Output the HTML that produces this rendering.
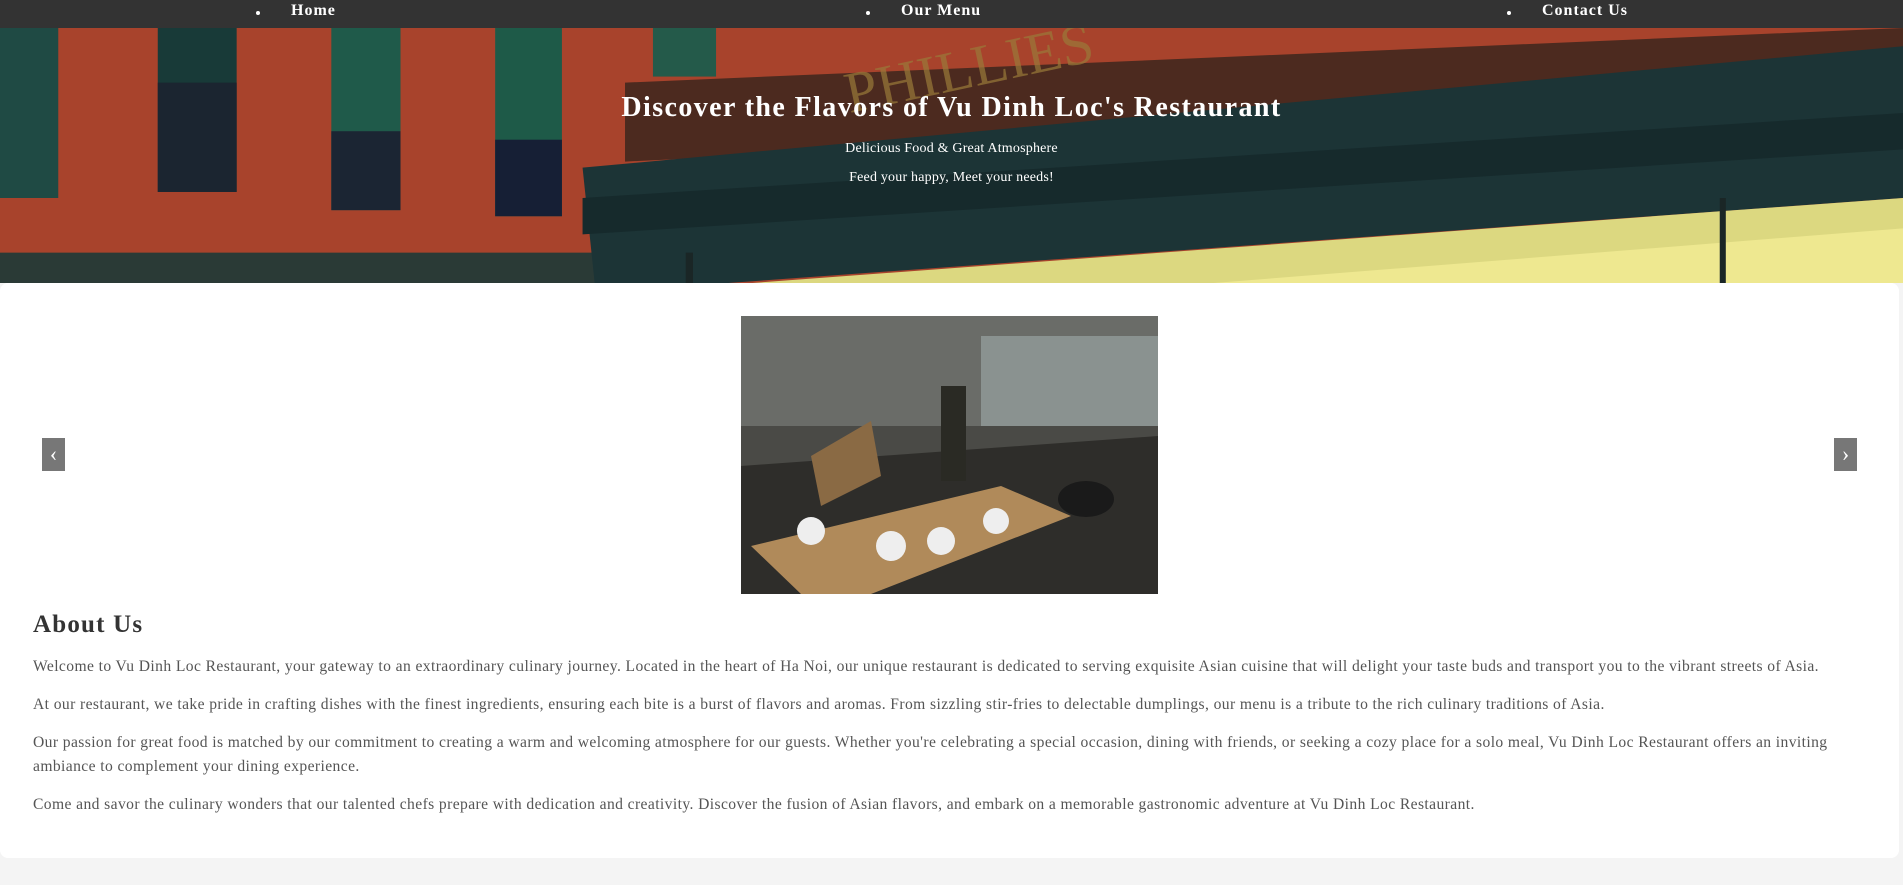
<!DOCTYPE html>
<html><head><meta charset="utf-8"><style>
*{box-sizing:border-box;margin:0;padding:0}
body{width:1903px;height:885px;background:#f4f4f4;font-family:"Liberation Serif",serif;overflow:hidden;position:relative}
nav{position:absolute;left:0;top:0;width:1903px;height:28px;background:#333}
nav span{position:absolute;top:2px;color:#fff;font-weight:bold;font-size:16px;letter-spacing:1px}
nav i{position:absolute;top:11px;width:4px;height:4px;border-radius:50%;background:#fff}
.hero{position:absolute;left:0;top:28px;width:1903px;height:255px;overflow:hidden}
.hero h1{position:absolute;top:64px;width:100%;text-align:center;color:#fff;font-size:28px;font-weight:bold;letter-spacing:1.4px}
.hero p{position:absolute;width:100%;text-align:center;color:#fff;font-size:14px;letter-spacing:.2px}
.card{position:absolute;left:0;top:283px;width:1899px;height:575px;background:#fff;border-radius:8px}
.pic{position:absolute;left:741px;top:33px;width:417px;height:278px;overflow:hidden;background:#3a3a38}
.arr{position:absolute;top:155px;width:23px;height:33px;background:#777;color:#fff;font-size:22px;text-align:center;line-height:31px}
h2{position:absolute;left:33px;top:328px;font-size:25px;color:#333;font-weight:bold;letter-spacing:1.2px}
.txt{position:absolute;left:33px;top:372px;width:1840px;color:#555;font-size:15.6px;line-height:24px;letter-spacing:.4px}
.txt p{margin-bottom:14px}
</style></head><body>
<nav>
<i style="left:256px"></i><span style="left:291px">Home</span>
<i style="left:866px"></i><span style="left:901px">Our Menu</span>
<i style="left:1507px"></i><span style="left:1542px">Contact Us</span>
</nav>
<div class="hero">
<svg width="1903" height="255" viewBox="0 0 1568 210" preserveAspectRatio="none" style="position:absolute;left:0;top:0">
<rect width="1568" height="210" fill="#a8432c"/>
<rect x="0" y="0" width="48" height="140" fill="#1f4a44"/>
<rect x="130" y="0" width="65" height="135" fill="#183a38"/>
<rect x="130" y="45" width="65" height="90" fill="#1b2530"/>
<rect x="273" y="0" width="57" height="150" fill="#1f5a4a"/>
<rect x="273" y="85" width="57" height="65" fill="#1b2533"/>
<rect x="408" y="0" width="55" height="155" fill="#1e5a48"/>
<rect x="408" y="92" width="55" height="63" fill="#161f35"/>
<rect x="538" y="0" width="52" height="40" fill="#245a4a"/>
<rect x="0" y="185" width="600" height="25" fill="#2a3a36"/>
<polygon points="515,45 1568,0 1568,60 515,110" fill="#4c2a1f"/>
<polygon points="480,115 1568,15 1568,140 600,210 490,210" fill="#1c3436"/>
<polygon points="480,140 1568,70 1568,100 480,170" fill="#162a2c"/>
<polygon points="620,210 1430,150 1568,140 1568,210" fill="#dcd880"/>
<polygon points="1000,210 1568,165 1568,210" fill="#eee890"/>
<rect x="1417" y="140" width="5" height="70" fill="#1a2626"/>
<rect x="565" y="185" width="6" height="25" fill="#1a2626"/>
<text x="700" y="70" fill="#9a7a3a" font-size="48" font-family="Liberation Serif" transform="rotate(-12 700 70)" opacity=".7">PHILLIES</text>
</svg>
<h1>Discover the Flavors of Vu Dinh Loc's Restaurant</h1>
<p style="top:113px">Delicious Food &amp; Great Atmosphere</p>
<p style="top:142px">Feed your happy, Meet your needs!</p>
</div>
<div class="card">
<div class="pic">
<svg width="417" height="278" viewBox="0 0 417 278">
<rect width="417" height="278" fill="#4a4a46"/>
<rect x="0" y="0" width="417" height="110" fill="#6a6c68"/>
<rect x="240" y="20" width="177" height="90" fill="#8a9290"/>
<polygon points="0,150 417,120 417,278 0,278" fill="#2e2d2a"/>
<polygon points="10,230 260,170 330,200 130,278 60,278" fill="#b08a5a"/>
<ellipse cx="345" cy="183" rx="28" ry="18" fill="#1a1a1a"/>
<rect x="200" y="70" width="25" height="95" fill="#2a2a24"/>
<circle cx="70" cy="215" r="14" fill="#eee"/><circle cx="150" cy="230" r="15" fill="#eee"/><circle cx="200" cy="225" r="14" fill="#eee"/><circle cx="255" cy="205" r="13" fill="#eee"/>
<polygon points="70,140 130,105 140,160 80,190" fill="#8a6a44"/>
</svg>
</div>
<div class="arr" style="left:42px">‹</div>
<div class="arr" style="left:1834px">›</div>
<h2>About Us</h2>
<div class="txt">
<p>Welcome to Vu Dinh Loc Restaurant, your gateway to an extraordinary culinary journey. Located in the heart of Ha Noi, our unique restaurant is dedicated to serving exquisite Asian cuisine that will delight your taste buds and transport you to the vibrant streets of Asia.</p>
<p>At our restaurant, we take pride in crafting dishes with the finest ingredients, ensuring each bite is a burst of flavors and aromas. From sizzling stir-fries to delectable dumplings, our menu is a tribute to the rich culinary traditions of Asia.</p>
<p>Our passion for great food is matched by our commitment to creating a warm and welcoming atmosphere for our guests. Whether you're celebrating a special occasion, dining with friends, or seeking a cozy place for a solo meal, Vu Dinh Loc Restaurant offers an inviting ambiance to complement your dining experience.</p>
<p>Come and savor the culinary wonders that our talented chefs prepare with dedication and creativity. Discover the fusion of Asian flavors, and embark on a memorable gastronomic adventure at Vu Dinh Loc Restaurant.</p>
</div>
</div>
</body></html>
